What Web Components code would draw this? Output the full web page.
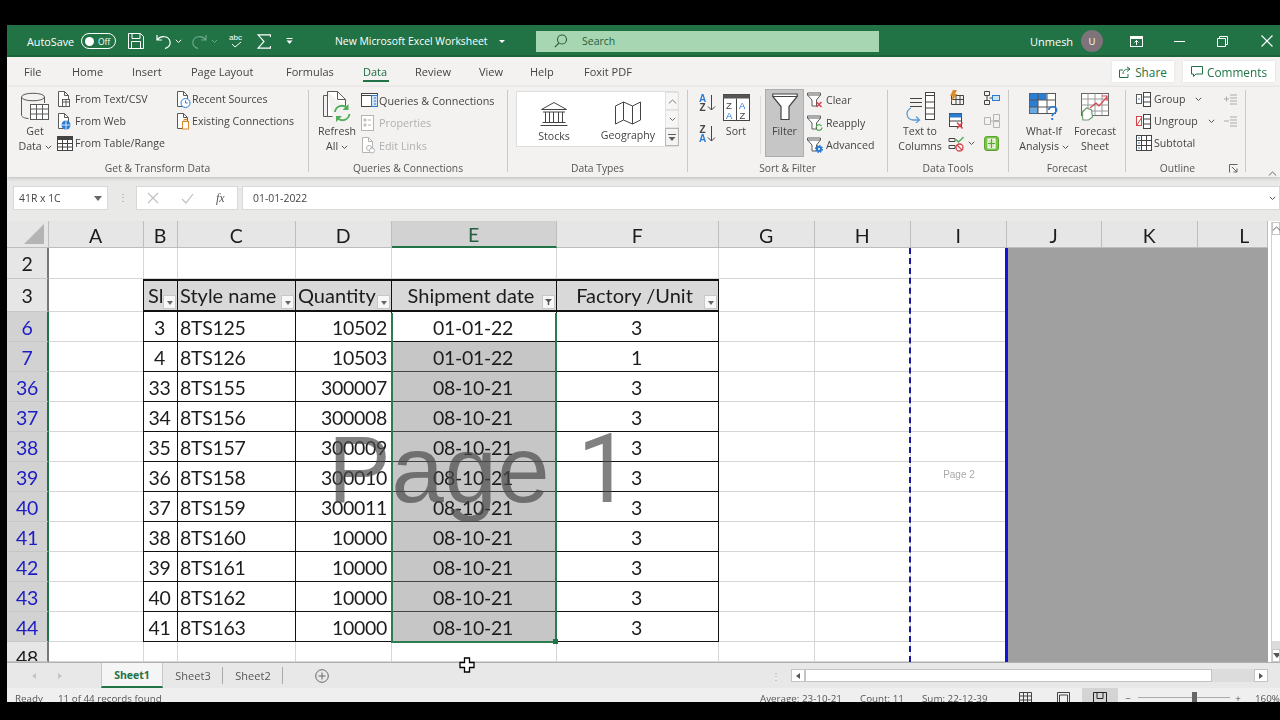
<!DOCTYPE html>
<html lang="en"><head><meta charset="utf-8"><title>New Microsoft Excel Worksheet</title>
<style>
html,body{margin:0;height:720px;overflow:hidden;background:#000}
body{padding:25px 0 0 7px;box-sizing:border-box;font-family:"Open Sans","Liberation Sans",sans-serif}
</style></head>
<body>
<x-app>
  <x-titlebar></x-titlebar>
  <x-tabs></x-tabs>
  <x-ribbon>
    <x-group label="Get &amp; Transform Data" style="width:302px;--pad:8px">
      <x-large icon="getdata" style="width:40px"><span>Get</span><span>Data <x-ic n="chev"></x-ic></span></x-large>
      <x-col style="margin:-2px 0 0 2px;--rh:22px;width:119px">
        <x-small icon="fromtext" style="--ib:18px">From Text/CSV</x-small>
        <x-small icon="fromweb" style="--ib:18px">From Web</x-small>
        <x-small icon="fromtable" style="--ib:18px">From Table/Range</x-small>
      </x-col>
      <x-col style="margin-top:-2px;--rh:22px">
        <x-small icon="recent" style="--ib:16px">Recent Sources</x-small>
        <x-small icon="existing" style="--ib:16px">Existing Connections</x-small>
      </x-col>
    </x-group>
    <x-group label="Queries &amp; Connections" style="width:199px;--pad:6px">
      <x-large icon="refresh" style="width:44px"><span>Refresh</span><span>All <x-ic n="chev"></x-ic></span></x-large>
      <x-col style="margin:-1px 0 0 2px;--rh:22.5px;font-size:10.800px">
        <x-small icon="queries" style="--ib:18px">Queries &amp; Connections</x-small>
        <x-small icon="props" style="--ib:18px" disabled>Properties</x-small>
        <x-small icon="editlinks" style="--ib:18px" disabled>Edit Links</x-small>
      </x-col>
    </x-group>
    <x-group label="Data Types" style="width:180px;--pad:8px">
      <x-gallery>
        <x-gitem icon="stocks">Stocks</x-gitem>
        <x-gitem icon="geography">Geography</x-gitem>
      </x-gallery>
    </x-group>
    <x-group label="Sort &amp; Filter" style="width:200px;--pad:11px">
      <x-col style="width:22px;--rh:30px;margin-top:3px">
        <x-ic n="az"></x-ic><x-ic n="za" style="margin-top:11px"></x-ic>
      </x-col>
      <x-large icon="sort" style="width:30px"><span>Sort</span></x-large>
      <x-vsep></x-vsep>
      <x-large icon="filter" active style="width:39px;margin-left:4px"><span>Filter</span></x-large>
      <x-col style="margin:-1px 0 0 3px;--rh:22.5px">
        <x-small icon="clear" style="--ib:19px">Clear</x-small>
        <x-small icon="reapply" style="--ib:19px">Reapply</x-small>
        <x-small icon="advanced" style="--ib:19px">Advanced</x-small>
      </x-col>
    </x-group>
    <x-group label="Data Tools" style="width:121px;--pad:4px">
      <x-large icon="t2c" style="width:56px"><span>Text to</span><span>Columns</span></x-large>
      <x-col style="width:36px;--rh:23px;margin-top:-4px">
        <x-small icon="flash" style="--ib:16px"></x-small>
        <x-small icon="removedup" style="--ib:16px"></x-small>
        <x-small icon="validate" style="--ib:20px"><x-ic n="chev"></x-ic></x-small>
      </x-col>
      <x-col style="--rh:22.5px;margin-top:-3px">
        <x-small icon="relations" style="--ib:16px"></x-small>
        <x-small icon="consol" style="--ib:16px"></x-small>
        <x-small icon="manage" style="--ib:16px"></x-small>
      </x-col>
    </x-group>
    <x-group label="Forecast" style="width:117px;--pad:5px">
      <x-large icon="whatif" style="width:60px"><span>What-If</span><span>Analysis <x-ic n="chev"></x-ic></span></x-large>
      <x-large icon="forecast" style="width:42px"><span>Forecast</span><span>Sheet</span></x-large>
    </x-group>
    <x-group label="Outline" launcher style="width:120px;--pad:10px;border-right-color:#c9c9c9">
      <x-col style="margin-top:-2px;--rh:22px;width:87px">
        <x-small icon="group" style="--ib:18px">Group<x-ic n="chev" style="margin-left:10px"></x-ic></x-small>
        <x-small icon="ungroup" style="--ib:18px">Ungroup<x-ic n="chev" style="margin-left:10px"></x-ic></x-small>
        <x-small icon="subtotal" style="--ib:18px">Subtotal</x-small>
      </x-col>
      <x-col style="margin:-2px 0 0 1px;--rh:22px">
        <x-small icon="showd" style="--ib:15px"></x-small>
        <x-small icon="hided" style="--ib:15px"></x-small>
      </x-col>
    </x-group>
  </x-ribbon>
  <x-formula></x-formula>
  <x-sheet></x-sheet>
  <x-sheetbar></x-sheetbar>
  <x-status></x-status>
</x-app>

<script>
const S='#5a5a5a',G='#217346',B='#2b7cd3',R='#d8434b',O='#d98a2b',LG='#4fae56',D='#b4b4b4';
const doc=c=>`<path stroke="${c||S}" fill="#fff" d="M1.5 .5h6l4 4v11h-10z"/><path stroke="${c||S}" d="M7.5 .5v4h4"/>`;
const fun=(c)=>`<path stroke="${c||S}" fill="#fff" d="M.5 1h13v2l-4 5v6H5V8L.5 3z"/><path stroke="${c||S}" d="M.5 3h13"/>`;
const I={
chev:[7,5,`<path stroke="#555" d="M.8 .8 3.5 3.5 6.2 .8"/>`],
getdata:[30,32,`<path stroke="${S}" d="M1.5 6C1.5 1 24.5 1 24.5 6v6M1.5 6c0 5 23 5 23 0M1.5 6v18c0 2 3 3.2 7 3.6"/><rect x="10.5" y="13.5" width="18" height="15" fill="#fff" stroke="${S}"/><path stroke="${S}" d="M10.5 18h18M10.500 23h18M16.500 13.500v15M22.500 13.500v15"/>`],
fromtext:[14,17,doc()+`<rect x="5.500" y="8.500" width="7" height="7" fill="#fff" stroke="${S}"/><path stroke="${S}" d="M5.500 11h7M9 8.500v7"/>`],
fromweb:[14,17,doc()+`<circle cx="9" cy="12" r="4.500" fill="${B}"/><path stroke="#fff" stroke-width=".8" d="M4.500 12h9M9 7.500v9"/>`],
fromtable:[16,15,`<rect x=".5" y=".5" width="15" height="14" fill="#fff" stroke="#444"/><rect x=".5" y=".5" width="15" height="3.500" fill="#444"/><path stroke="#444" d="M.5 7.500h15M.5 11h15M5.500 4v10.500M10.500 4v10.500"/>`],
recent:[15,17,doc()+`<circle cx="9.500" cy="12" r="4.500" fill="#fff" stroke="${B}"/><path stroke="${B}" d="M9.500 9.500V12h2.200"/>`],
existing:[15,17,doc()+`<rect x="6.500" y="8.500" width="6" height="7.500" fill="#fff" stroke="${O}"/><path stroke="${O}" d="M8 8.500V6.500h3v2"/>`],
refresh:[30,32,`<path stroke="${S}" d="M5.500 4.500H1.500v21h6"/><path stroke="${S}" fill="#fff" d="M5.500 .5h10l8 8v8M5.500 .5v25h5"/><path stroke="${S}" d="M15.500 .5v8h8"/><path fill="none" stroke="${LG}" stroke-width="1.800" d="M13 21a7 7 0 0 1 12-4M27.500 23a7 7 0 0 1-12 4"/><path fill="${LG}" d="M26.500 13v6h-6zM14 31v-6h6z"/>`],
queries:[17,14,`<rect x=".5" y=".5" width="16" height="13" fill="#fff" stroke="#444"/><path stroke="#444" d="M.5 2.500h16"/><rect x="10.500" y="2.500" width="6" height="11" fill="#cfe3f5" stroke="${B}"/><path stroke="${B}" d="M13 5h2M13 8h2M13 11h2"/>`],
props:[13,16,`<rect x=".5" y=".5" width="12" height="15" fill="#fff" stroke="${D}"/><path stroke="${D}" d="M3 4h2v2H3zM3 9h2v2H3zM7 5h3M7 10h3"/>`],
editlinks:[15,17,doc(D)+`<circle cx="8" cy="11" r="2.500" stroke="${D}" fill="#fff"/><circle cx="11" cy="13.500" r="2.500" stroke="${D}" fill="#fff"/>`],
stocks:[28,25,`<path stroke="#444" d="M1.500 8.500 14 1.500l12.500 7zM3 11h22M2.500 21.500h23M.5 24.500h27M5.500 11v10M9.500 11v10M13.500 11v10M18.500 11v10M22.500 11v10"/>`],
geography:[28,24,`<path stroke="#444" d="M1.500 5 9.500 1l9 4 8-4v18l-8 4-9-4-8 4zM9.500 1v18M18.500 5v18"/>`],
az:[17,20,`<text x="0" y="9" font-size="10" font-weight="700" font-family="Liberation Sans" fill="${B}">A</text><text x=".5" y="18" font-size="10" font-weight="700" font-family="Liberation Sans" fill="#444">Z</text><path stroke="#444" d="M12.500 2v15M9 13.500l3.500 3.500 3.500-3.500"/>`],
za:[17,20,`<text x=".5" y="9" font-size="10" font-weight="700" font-family="Liberation Sans" fill="#444">Z</text><text x="0" y="18" font-size="10" font-weight="700" font-family="Liberation Sans" fill="${B}">A</text><path stroke="#444" d="M12.500 2v15M9 13.500l3.500 3.500 3.500-3.500"/>`],
sort:[27,27,`<rect x=".5" y=".5" width="26" height="26" fill="#fff" stroke="#444"/><rect x=".5" y=".5" width="26" height="4" fill="#555"/><path stroke="#444" d="M13.500 4.500v22"/><text x="3" y="14.500" font-size="9.500" font-family="Liberation Sans" fill="#444">Z</text><text x="3" y="24.500" font-size="9.500" font-family="Liberation Sans" fill="${B}">A</text><text x="16" y="14.500" font-size="9.500" font-family="Liberation Sans" fill="${B}">A</text><text x="16.500" y="24.500" font-size="9.500" font-family="Liberation Sans" fill="#444">Z</text>`],
filter:[26,28,`<path stroke="#444" stroke-width="1.200" fill="#fff" d="M.8 1h24.400v2.500L17 13.500V26.500H9V13.500L.8 3.500z"/><path stroke="#444" d="M.8 3.500h24.400"/>`],
clear:[16,16,fun()+`<path stroke="${R}" stroke-width="1.500" d="M9.500 10l5 5M14.500 10l-5 5"/>`],
reapply:[16,16,fun()+`<path stroke="${LG}" stroke-width="1.300" d="M9 12.500a3 3 0 0 1 5.500-1.500M15 12.500a3 3 0 0 1-5.500 1.500"/>`],
advanced:[16,16,fun()+`<circle cx="12" cy="12" r="3" fill="${B}" stroke="${B}" stroke-dasharray="1.500 .8" stroke-width="2"/><circle cx="12" cy="12" r="1" fill="#fff"/>`],
t2c:[32,31,`<path stroke="#444" d="M6 6.500h12M6 10.500h12M6 14.500h12"/><rect x="21.500" y=".5" width="9" height="27" fill="#fff" stroke="#444"/><path stroke="#444" d="M21.500 3.500h9M21.500 10h9M21.500 16h9M21.500 22h9"/><path stroke="#5a9bd5" stroke-width="1.300" d="M7 16c-6 3-5 11 2 12h6M12 24.500l3.500 3.500-3.500 3"/>`],
flash:[16,15,`<path stroke="#444" d="M3.500 5.500h12v9h-12zM3.500 9.500h12M8 5.500v9M12 5.500v9"/><path fill="${O}" d="M5 0h4L7 4h2.500L3 12l1.500-6H2z"/>`],
removedup:[16,16,`<rect x="1.500" y=".5" width="12" height="13" fill="#fff" stroke="#444"/><rect x="1.500" y=".5" width="12" height="4" fill="${B}"/><path stroke="#444" d="M1.500 8h12"/><path stroke="${R}" stroke-width="1.500" d="M9 9.500l5.500 6M14.500 9.500l-5.500 6"/>`],
validate:[16,16,`<path stroke="#444" d="M1 2.500h6v3H1zM1 9.500h6v3H1z"/><path stroke="${LG}" stroke-width="1.300" d="M8 3.500l2.500 2.500 5-5"/><circle cx="11.500" cy="11.500" r="3.500" fill="#fff" stroke="${R}" stroke-width="1.300"/><path stroke="${R}" stroke-width="1.300" d="M9 9l5 5"/>`],
relations:[16,14,`<path stroke="#444" d="M.5 .5h5v4h-5zM.5 9.500h5v4h-5zM5.500 7h3M3 4.500v5"/><rect x="8.500" y="4.500" width="7" height="5" fill="#cfe3f5" stroke="${B}"/>`],
consol:[16,14,`<path stroke="${D}" d="M.5 3.500h6v7h-6zM9.500 .5h6v6h-6zM9.500 7.500h6v6h-6zM6.500 7h3"/>`],
manage:[15,15,`<rect x=".5" y=".5" width="14" height="14" rx="2.500" fill="#7dc24b" stroke="#5aa52e"/><rect x="4" y="3" width="7" height="9" fill="#cfe9b8" stroke="#fff"/><path stroke="#5aa52e" d="M7.500 3v9M4 7.500h7"/>`],
whatif:[30,28,`<rect x=".5" y=".5" width="26" height="20" fill="#fff" stroke="#555"/><rect x=".5" y=".5" width="17" height="6.500" fill="${B}"/><rect x=".5" y="7" width="8.500" height="13.500" fill="${B}"/><rect x="1" y="14" width="7" height="6" fill="#6aa8de"/><path stroke="#555" d="M.5 7h26M.5 14h26M9 .5v20M18 .5v20"/><text x="18" y="27" font-size="20" font-family="Liberation Sans" fill="${B}">?</text>`],
forecast:[29,28,`<rect x=".5" y=".5" width="27" height="22" fill="#fff" stroke="#666"/><path stroke="#999" d="M.5 6h27M.5 12h27M.5 18h27M7 .5v22M14 .5v22M21 .5v22"/><path stroke="#6a9b6d" stroke-width="1.200" fill="#fff" d="M1.500 24v-5l4-4 5 2 1 7-4 3H2z"/><path stroke="#d8434b" stroke-width="1.200" d="M9 15l6-5 3 3 8-9M21 3h5v5"/>`],
group:[15,15,`<rect x=".5" y="2.500" width="5" height="9" fill="#fff" stroke="${S}"/><path stroke="${B}" d="M2 7h2"/><rect x="7.500" y=".5" width="7" height="14" fill="#fff" stroke="#444"/><path stroke="#444" d="M7.500 5h7M7.500 10h7"/>`],
ungroup:[15,15,`<rect x=".5" y="2.500" width="5" height="9" fill="#fff" stroke="${R}"/><path stroke="${R}" d="M1 11 6 3"/><rect x="7.500" y=".5" width="7" height="14" fill="#fff" stroke="#444"/><path stroke="#444" d="M7.500 5h7M7.500 10h7"/>`],
subtotal:[16,16,`<rect x=".5" y=".5" width="15" height="15" fill="#fff" stroke="#444"/><path stroke="#444" d="M.5 5.500h15M.5 10.500h15M5.500 .5v15M10.500 .5v15"/><path stroke="${B}" d="M2 3h2M2 8h2M2 13h2"/>`],
showd:[14,11,`<path stroke="#aaa" d="M0 5h5M2.500 2.500v5M6 1h7M6 4h7M6 7h7M6 10h7"/>`],
hided:[14,11,`<path stroke="#aaa" d="M0 5h5M6 1h7M6 4h7M6 7h7M6 10h7"/>`],
save:[16,16,`<path stroke="#fff" d="M.5 .5h12l3 3v12H.5zM4 .5v5h8v-5M3.500 15.500v-7h9v7"/>`],
undo:[15,15,`<path stroke="#fff" stroke-width="1.200" d="M1 1v5h5M1.500 5.500C5 1 13 2 14 7.500c.6 3.500-2 6-5 7"/>`],
redo:[15,15,`<path stroke="#6ea98a" stroke-width="1.200" d="M14 1v5H9M13.500 5.500C10 1 2 2 1 7.500c-.6 3.500 2 6 5 7"/>`],
wchev:[7,5,`<path stroke="#fff" d="M.8 .8 3.500 3.500 6.200 .8"/>`],
wtri:[6,3,`<path fill="#fff" d="M0 0h6L3 3z"/>`],
gchev:[7,5,`<path stroke="#6ea98a" d="M.8 .8 3.500 3.500 6.200 .8"/>`],
abc:[15,16,`<text x="0" y="7" font-size="8" font-family="Liberation Sans" fill="#fff">abc</text><path stroke="#fff" d="M3 11l3 3 6-5"/>`],
sigma:[14,15,`<path stroke="#fff" stroke-width="1.200" d="M13.500 3V.8H1l6 6.700-6 6.700h12.500V12"/>`],
qat:[7,6,`<path stroke="#fff" d="M.5 .5h6"/><path fill="#fff" d="M.5 2.500h6L3.500 6z"/>`],
more:[8,7,`<path stroke="#444" d="M0 .5h8"/><path fill="#444" d="M.5 3h7L4 7z"/>`],
search:[13,14,`<circle cx="8" cy="5.500" r="4.500" stroke="#285f3f" stroke-width="1.100"/><path stroke="#285f3f" stroke-width="1.100" d="M5 9 .8 13.200"/>`],
ribdisp:[13,11,`<rect x=".5" y=".5" width="12" height="10" stroke="#fff"/><rect x="1" y="1" width="11" height="2" fill="#fff"/><path stroke="#fff" d="M6.500 9V4.500M4.500 6.500l2-2 2 2"/>`],
min:[11,1,`<path stroke="#fff" d="M0 .5h11"/>`],
rest:[11,11,`<path stroke="#fff" d="M.5 2.500h8v8h-8zM2.500 2.500v-2h8v8h-2"/>`],
close:[12,12,`<path stroke="#fff" stroke-width="1.100" d="M.5 .5l11 11M11.500 .5l-11 11"/>`],
share:[12,12,`<path stroke="${G}" d="M4 4H.5v7.500h8.500V8"/><path stroke="${G}" d="M4 8c0-4 3-5 6-5M8 .8 11 3 8 5.500"/>`],
comment:[12,11,`<path stroke="${G}" d="M.5 .5h11v7.500H5L2.500 10.500V8h-2z"/>`],
launch:[9,9,`<path stroke="#666" d="M.5 8.500V.5h8M3 3l5 5M8 4.500V8H4.500"/>`],
up:[9,5,`<path stroke="#666" d="M.8 4.500 4.500 1l3.700 3.500"/>`],
cancel:[12,12,`<path stroke="#c0c0c0" stroke-width="1.200" d="M1 1l10 10M11 1 1 11"/>`],
enter:[13,11,`<path stroke="#c0c0c0" stroke-width="1.200" d="M1 6l4 4 7-9"/>`],
addsheet:[14,14,`<circle cx="7" cy="7" r="6.300" stroke="#666"/><path stroke="#666" d="M3.500 7h7M7 3.500v7"/>`],
normal:[13,12,`<path stroke="#444" d="M.5 .5h12v11H.5zM.5 4h12M.5 8h12M4.500 .5v11M8.500 .5v11"/>`],
layout:[13,12,`<path stroke="#444" d="M.5 .5h12v11H.5zM2.500 3h8v9h-8z"/>`],
pbreak:[14,12,`<path stroke="#222" d="M.5 12V.5h13V12M4 .5v6h6v-6"/>`],
cursor:[16,16,`<path fill="#fff" stroke="#000" stroke-width="1.300" d="M5.500 1h5v4.500H15v5h-4.500V15h-5v-4.500H1v-5h4.500z"/>`]
};
const def=(n,css,html)=>customElements.define(n,class extends HTMLElement{
  constructor(){super();this.attachShadow({mode:'open'}).innerHTML=`<style>${css}</style>${typeof html==='function'?'':html}`;}
  connectedCallback(){if(typeof html==='function'&&!this._d){this._d=1;this.shadowRoot.innerHTML+=html(this);} }
});
const ic=(n,st)=>`<x-ic n="${n}"${st?` style="${st}"`:''}></x-ic>`;

def('x-ic',':host{display:inline-flex;flex:none;vertical-align:middle}svg{display:block;fill:none}',h=>{const a=I[h.getAttribute('n')];return `<svg width="${a[0]}" height="${a[1]}" viewBox="0 0 ${a[0]} ${a[1]}">${a[2]}</svg>`;});

def('x-app',':host{display:flex;flex-direction:column;width:1273px;height:677px;overflow:hidden;position:relative;filter:blur(.35px)}.cur{position:absolute;left:452px;top:627px}',`<slot></slot><div class="cur">${ic('cursor')}</div>`);

def('x-titlebar',`:host{display:flex;align-items:center;height:32px;flex:none;background:#217346;border-bottom:2px solid #1c6339;box-sizing:border-box;padding-top:2px;color:#fff;font-size:10.800px}
.i{flex:none;display:flex;align-items:center;white-space:nowrap}
.tg{width:35px;height:16px;border:1.300px solid #fff;border-radius:9px;box-sizing:border-box;display:flex;align-items:center;padding-left:3px;gap:4px;font-size:8.500px}
.tg b{width:9px;height:9px;border-radius:50%;background:#fff}
.s{width:343px;height:21px;background:#a6d6b2;color:#285f3f;gap:15px;padding-left:18px;box-sizing:border-box;font-size:10.500px}
.av{width:22px;height:22px;border-radius:50%;background:#7d7379;justify-content:center;font-size:9.500px}`,
`<div class="i" style="width:54px;margin-left:20px">AutoSave</div><div class="i tg"><b></b>Off</div>
<div class="i" style="margin-left:12px;width:28px">${ic('save')}</div><div class="i" style="width:36px;gap:4px">${ic('undo')}${ic('wchev')}</div>
<div class="i" style="width:37px;gap:4px">${ic('redo')}${ic('gchev')}</div><div class="i" style="width:28px">${ic('abc')}</div>
<div class="i" style="width:29px">${ic('sigma')}</div><div class="i" style="width:49px">${ic('qat')}</div>
<div class="i" style="width:201px;gap:5px"><span style="width:159px;font-size:10.400px">New Microsoft Excel Worksheet</span>${ic('wtri')}</div>
<div class="i s">${ic('search')}<span>Search</span></div>
<div class="i" style="margin-left:151px;width:51px;font-size:11px">Unmesh</div><div class="i av">U</div>
<div class="i" style="margin-left:27px;width:44px">${ic('ribdisp')}</div><div class="i" style="width:43px">${ic('min')}</div>
<div class="i" style="width:44px">${ic('rest')}</div><div class="i">${ic('close')}</div>`);

def('x-tabs',`:host{display:flex;align-items:center;height:30px;flex:none;background:#f3f2f1;color:#444;font-size:11px}
span{flex:none;white-space:nowrap;position:relative;height:30px;line-height:30px}
.on{color:#1e6b41}.on::after{content:"";position:absolute;left:0;width:26px;top:23px;height:2px;background:#217346}
.b{display:flex;align-items:center;justify-content:center;gap:4px;height:21px;background:#fff;color:#217346;font-size:11.800px;margin-top:-1px;flex:none;box-shadow:0 0 2px #ddd}`,
`<span style="margin-left:17px;width:48px">File</span><span style="width:60px">Home</span><span style="width:59px">Insert</span><span style="width:95px">Page Layout</span><span style="width:77px">Formulas</span><span class="on" style="width:52px">Data</span><span style="width:64px">Review</span><span style="width:51px">View</span><span style="width:54px">Help</span><span style="width:60px">Foxit PDF</span>
<div class="b" style="margin-left:468px;width:62px">${ic('share')}Share</div><div class="b" style="margin-left:9px;width:92px">${ic('comment')}Comments</div>`);

def('x-ribbon',`:host{display:flex;height:90px;flex:none;background:#f3f2f1;color:#444;font-size:10.600px;position:relative;z-index:1;box-shadow:0 1px 4px rgba(0,0,0,.2)}
.u{margin:78px 0 0 22px}`,`<slot></slot><div class="u">${ic('up')}</div>`);

def('x-group',`:host{display:flex;flex-direction:column;flex:none;box-sizing:border-box;height:82px;margin-top:3px;border-right:1px solid #c9c9c9}
.c{flex:1;display:flex;padding-left:var(--pad,0);min-height:0}
.l{height:14px;line-height:14px;display:flex;font-size:10.300px;color:#555;margin:3px 0 -3px}.t{flex:1;text-align:center}.k{width:16px;display:flex;align-items:center}`,
h=>`<div class="c"><slot></slot></div><div class="l"><span class="t">${h.getAttribute('label').replace(/&/g,'&amp;')}</span>${h.hasAttribute('launcher')?`<span class="k">${ic('launch')}</span>`:''}</div>`);

def('x-large',`:host{display:flex;flex-direction:column;align-items:center;flex:none;box-sizing:border-box;height:68px;white-space:nowrap}
.ic{height:34px;display:flex;align-items:center;justify-content:center;flex:none}
.t{display:flex;flex-direction:column;align-items:center;line-height:15px}
:host([active]){background:#c6c6c6;border:1px solid #aeaeae;margin-top:-1px}`,
h=>`<div class="ic">${ic(h.getAttribute('icon'))}</div><div class="t"><slot></slot></div>`);

def('x-col',`:host{display:flex;flex-direction:column;flex:none}`,`<slot></slot>`);

def('x-small',`:host{display:flex;align-items:center;height:var(--rh,22px);white-space:nowrap;flex:none}
:host([disabled]){color:#b0b0b0}.i{width:var(--ib,18px);flex:none;display:flex}`,
h=>`<span class="i">${ic(h.getAttribute('icon'))}</span><slot></slot>`);

def('x-vsep',`:host{display:block;width:1px;height:58px;background:#dcdcdc;margin:6px 0 0 9px;flex:none}`,'');

def('x-gallery',`:host{display:flex;box-sizing:border-box;width:162px;height:56px;margin-top:1px;background:#fff;border:1px solid #dedede;flex:none}
.g{display:flex;flex:1}.v{display:flex;flex-direction:column;width:14px;flex:none}
.v div{flex:1;border:1px solid #dedede;background:#f5f5f5;display:flex;align-items:center;justify-content:center;opacity:.85}
.v .on{border-color:#aaa;background:#f3f3f3}`,
`<div class="g"><slot></slot></div><div class="v"><div>${ic('up')}</div><div>${ic('chev')}</div><div class="on">${ic('more')}</div></div>`);

def('x-gitem',`:host{display:flex;flex-direction:column;align-items:center;width:74px;flex:none;box-sizing:border-box;padding-top:9px;gap:3px;line-height:15px}`,
h=>`${ic(h.getAttribute('icon'))}<slot></slot>`);

def('x-formula',`:host{display:flex;height:44px;flex:none;box-sizing:border-box;padding-top:9px;background:#e9e9e8;color:#444;font-size:10.400px}
.b{height:24px;background:#fff;border:1px solid #d8d8d8;box-sizing:border-box;display:flex;align-items:center;flex:none}
.f{font:italic 12px "Liberation Serif",serif;color:#555}`,
`<div class="b" style="margin-left:6px;width:95px;padding-left:5px;justify-content:space-between;padding-right:5px">41R x 1C <svg width="8" height="5"><path d="M0 0h8L4 5z" fill="#666"/></svg></div>
<div style="margin-left:10px;width:18px;color:#999;line-height:22px;font-size:10px">⋮</div>
<div class="b" style="width:102px;gap:22px;padding-left:10px">${ic('cancel')}${ic('enter')}<span class="f">fx</span></div>
<div class="b" style="margin-left:4px;flex:1;padding-left:10px;justify-content:space-between;padding-right:3px"><span>01-01-2022</span>${ic('chev')}</div>`);

(function(){
const cols=['',"A","B","C","D","E","F","G","H","I","J","K","L"];
const cw=[42,95,34,118,96,165,162,96,96,96,95,96,70,12];
const rows=[['2',31],['3',33],['6',30],['7',30],['36',30],['37',30],['38',30],['39',30],['40',30],['41',30],['42',30],['43',30],['44',30],['48',20]];
const data=[[3,'8TS125',10502,'01-01-22',3],[4,'8TS126',10503,'01-01-22',1],[33,'8TS155',300007,'08-10-21',3],[34,'8TS156',300008,'08-10-21',3],[35,'8TS157',300009,'08-10-21',3],[36,'8TS158',300010,'08-10-21',3],[37,'8TS159',300011,'08-10-21',3],[38,'8TS160',10000,'08-10-21',3],[39,'8TS161',10000,'08-10-21',3],[40,'8TS162',10000,'08-10-21',3],[41,'8TS163',10000,'08-10-21',3]];
const head=['Sl','Style name','Quantity','Shipment date','Factory /Unit'];
const css=`:host{display:block;position:relative;height:441px;flex:none;overflow:hidden;background:#fff;color:#1c1c1c;font:19.500px Lato,"Liberation Sans",sans-serif;letter-spacing:-.3px}
.g{display:grid;grid-template-columns:${cw.map(x=>x+'px').join(' ')};grid-template-rows:27px ${rows.map(r=>r[1]+'px').join(' ')};height:441px}
.c{box-sizing:border-box;border-right:1px solid #d6d6d6;border-bottom:1px solid #d6d6d6;display:flex;align-items:center;white-space:nowrap;overflow:hidden;min-width:0}
.ch{background:#e6e6e6;justify-content:center;border-color:#bdbdbd;padding:2px 1px 0 0}
.ch.sel{background:#d2d2d2;color:#24603f;border-bottom:2px solid #217346}
.corner{background:#e6e6e6;position:relative;border-color:#bdbdbd}
.corner::after{content:"";position:absolute;right:4px;bottom:3px;border-style:solid;border-width:0 0 20px 20px;border-color:transparent transparent #b4b4b4 transparent}
.rh{background:#e6e6e6;justify-content:center;border-color:#c6c6c6;align-items:flex-start}
.rh.f{color:#1c1cc4;background:#d2d2d2;border-right:2px solid #217346}
.rh.d{border-right:2px solid #777}
.t{border-color:#111;padding:1px 4px 0 2px}
.tl{border-left:1px solid #111;margin-left:-1px}
.h{background:#d9d9d9;border-bottom-width:2px;border-top:2px solid #111;position:relative;font-size:20px;letter-spacing:0;padding-top:0;padding-bottom:1px}
.r{justify-content:flex-end}.m{justify-content:center}
.s{background:#c6c6c6;border-bottom-color:#444;border-right-color:#c6c6c6}
.fb{position:absolute;right:1px;bottom:1px;width:13px;height:14px;box-sizing:border-box;background:#f7f7f7;border:1px solid #c8c8c8;display:flex;align-items:flex-end;justify-content:center;padding-bottom:3px}
.fb i{display:block;border-style:solid;border-width:4px 3.500px 0;border-color:#666 transparent transparent}
.fa i{border-width:0;width:7px;height:6px;background:#555;clip-path:polygon(0 0,100% 0,60% 50%,60% 100%,40% 100%,40% 50%)}
.gray{grid-column:11/14;grid-row:2/-1;background:#a0a0a0;border-left:3px solid #1212d8;margin-left:-2px;z-index:1}
.vs{grid-column:14;grid-row:1/-1;background:#fff;display:flex;flex-direction:column;border-left:1px solid #d0d0d0;box-sizing:border-box;margin:1px 0 0 3px}
.vs div{height:13px;display:flex;align-items:center;justify-content:center;border:1px solid #c8c8c8;box-sizing:border-box;background:#fff;flex:none}
.vs span{flex:1}.vs u{height:8px;background:#dcdcdc;display:block}
.sel-b{position:absolute;left:384px;top:92px;width:166px;height:330px;box-sizing:border-box;border:2px solid #2b7d50;border-top:0;pointer-events:none}
.sel-b::after{content:"";position:absolute;right:-3px;bottom:-3px;width:5px;height:5px;background:#217346}
.dash{position:absolute;left:902px;top:27px;bottom:0;border-left:2px dashed #18189c}
.p2{position:absolute;left:904px;width:96px;top:248px;text-align:center;font:10px "Liberation Sans",sans-serif;color:#a8a8a8;letter-spacing:0}
.wm{position:absolute;left:321px;top:195px;font:94px/106px "Liberation Sans",sans-serif;color:rgba(70,70,70,.68);white-space:nowrap;letter-spacing:.7px;z-index:2}
.wm span{font:96px/106px Roboto,"Liberation Sans",sans-serif;letter-spacing:0}`;
let h='<div class="g">';
cols.forEach((c,i)=>{h+= i==0?'<div class="c corner"></div>':`<div class="c ch${c=='E'?' sel':''}"${c=='L'?' style="padding-left:24px"':''}>${c}</div>`;});
h+='<div class="vs"><div>'+ic('up')+'</div><span></span><u></u><div>'+'<svg width="8" height="5"><path d="M0 0h8L4 5z" fill="#555"/></svg>'+'</div></div>';
h+='<div class="gray"></div>';
rows.forEach((r,ri)=>{
  const f=ri>=2&&ri<13;
  const lh=ri==13?32:(ri<2?r[1]:r[1]+2);
  h+=`<div class="c rh${f?' f':' d'}" style="line-height:${lh}px">${r[0]}</div>`;
  for(let c=1;c<=9;c++){
    let cl='c',txt='';
    if(c>=2&&c<=6&&ri==1){
      const fa=c==5;
      cl+=' t h'+(c==2?' tl':'')+(c==2||c==3||c==4?'':' m');
      const sty=c>=5?'padding-right:4px;':'';
      txt=`<span style="${sty}${c==2?'padding-left:2px;':''}">${head[c-2]}</span><span class="fb${fa?' fa':''}"><i></i></span>`;
    } else if(c>=2&&c<=6&&f){
      const d=data[ri-2];
      cl+=' t'+(c==2?' tl m':c==3?'':c==4?' r':' m');
      if(c==5&&ri>2)cl+=' s';
      txt=String(d[c-2]);
    }
    h+=`<div class="${cl}">${txt}</div>`;
  }
});
h+='</div><div class="wm">Page <span>1</span></div><div class="sel-b"></div><div class="dash"></div><div class="p2">Page 2</div>';
def('x-sheet',css,h);
})();

def('x-sheetbar',`:host{display:flex;align-items:center;height:26px;flex:none;background:#e8e8e8;border-top:1px solid #b0b0b0;box-sizing:border-box;color:#555;font-size:11px}
.n{width:0;height:0;border-style:solid;flex:none}
.t{flex:none;height:25px;display:flex;align-items:center;justify-content:center;box-sizing:border-box;margin-top:-1px;padding-top:1px}
.a{width:62px;background:#f5f5f5;color:#217346;font-weight:700;border-bottom:2px solid #217346;border-left:1px solid #c8c8c8;border-right:1px solid #c8c8c8;font-size:10.500px}
.o{width:60px;position:relative}.o::after{content:"";position:absolute;right:0;top:4px;bottom:4px;width:1px;background:#aaa}
.hs{display:flex;height:13px;width:477px;margin-left:8px;flex:none}
.hs div{box-sizing:border-box;flex:none}.bt{width:14px;background:#fff;border:1px solid #c4c4c4;display:flex;align-items:center;justify-content:center}
.th{width:407px;background:#fff;border:1px solid #c4c4c4}.tr{flex:1!important;background:#dcdcdc}`,
`<span class="n" style="margin-left:25px;border-width:3px 4px 3px 0;border-color:transparent #c4c4c4 transparent transparent"></span>
<span class="n" style="margin-left:22px;border-width:3px 0 3px 4px;border-color:transparent transparent transparent #c4c4c4"></span>
<div class="t a" style="margin-left:39px">Sheet1</div><div class="t o">Sheet3</div><div class="t o">Sheet2</div>
<div style="margin-left:32px;flex:none;display:flex">${ic('addsheet')}</div>
<span style="margin-left:442px;color:#aaa;flex:none;width:12px;font-size:10px">⋮</span>
<div class="hs"><div class="bt"><span class="n" style="border-width:3.500px 4px 3.500px 0;border-color:transparent #555 transparent transparent"></span></div><div class="th"></div><div class="tr"></div><div class="bt"><span class="n" style="border-width:3.500px 0 3.500px 4px;border-color:transparent transparent transparent #555"></span></div></div>`);

def('x-status',`:host{display:flex;height:14px;flex:none;background:#efefef;color:#555;font-size:9.800px;line-height:14px;overflow:hidden;box-sizing:border-box}
.i{flex:none;display:flex;white-space:nowrap;height:24px;box-sizing:border-box;padding-top:4px}
.v{justify-content:center;padding-top:4px}
.s{width:92px;position:relative}.s::before{content:"";position:absolute;left:0;right:0;top:9px;height:1px;background:#aaa}.s::after{content:"";position:absolute;left:54px;top:4px;width:5px;height:14px;background:#666}`,
`<div class="i" style="margin-left:8px;width:43px">Ready</div><div class="i" style="width:702px">11 of 44 records found</div>
<div class="i" style="width:100px">Average: 23-10-21</div><div class="i" style="width:62px">Count: 11</div><div class="i" style="width:84px">Sum: 22-12-39</div>
<div class="i v" style="width:38px">${ic('normal')}</div><div class="i v" style="width:38px">${ic('layout')}</div><div class="i v" style="width:36px;background:#d4d4d4">${ic('pbreak')}</div>
<div class="i" style="width:20px;justify-content:center">−</div><div class="i s"></div><div class="i" style="width:16px;justify-content:center">+</div>
<div class="i" style="margin-left:9px">160%</div>`);
</script>
</body></html>
